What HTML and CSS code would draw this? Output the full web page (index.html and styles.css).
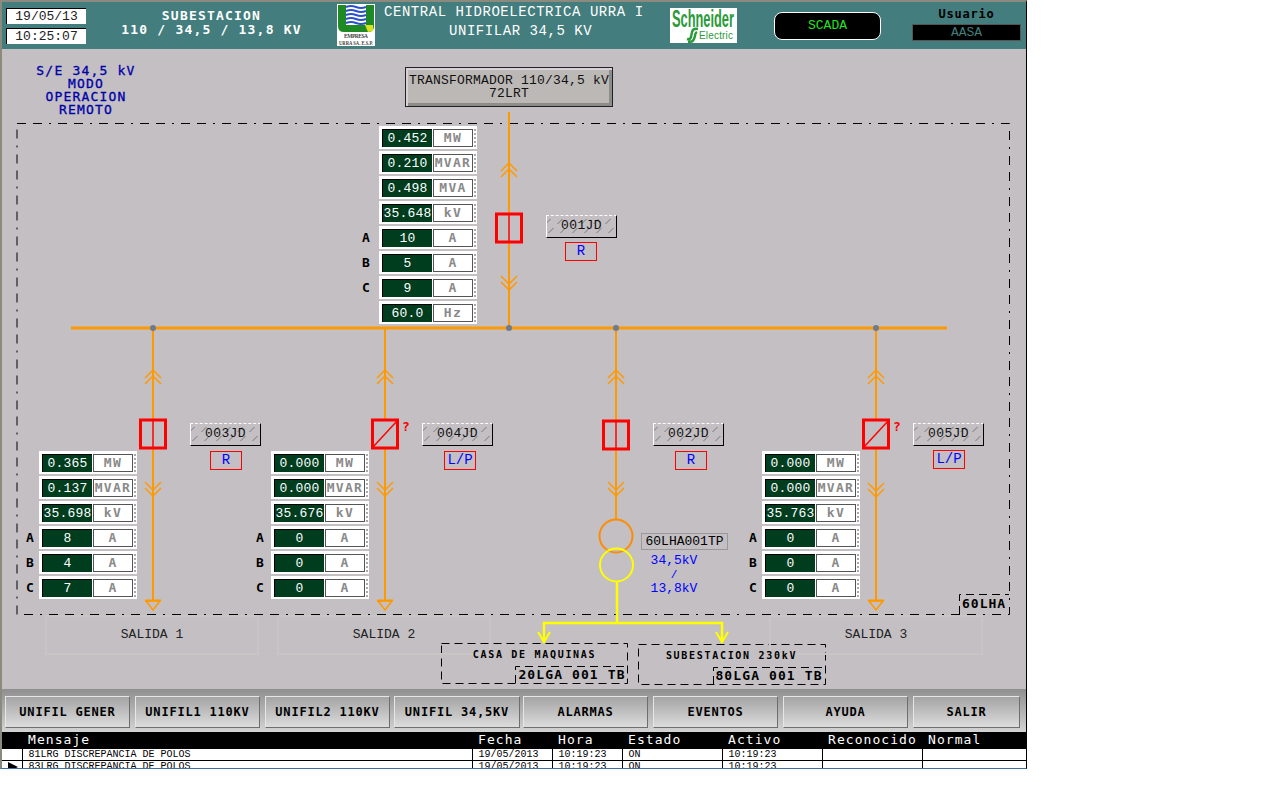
FILE: index.html
```html
<!DOCTYPE html>
<html lang="es">
<head>
    <meta charset="UTF-8">
    <title>Unifilar 34,5 kV</title>
    <link rel="stylesheet" href="styles.css">
</head>
<body>
<div class="screen">
    <!-- top bar -->
    <header class="topbar">
        <div class="clock">
            <div class="clock-box">19/05/13</div>
            <div class="clock-box">10:25:07</div>
        </div>
        <div class="station">SUBESTACION<br>110 / 34,5 / 13,8 KV</div>
        <svg class="logo-urra" width="38" height="42" viewBox="0 0 38 42">
            <rect width="38" height="42" fill="#fff"/>
            <path d="M1 1H37V22Q37 28 31 28H7Q1 28 1 22Z" fill="#1f8a24"/>
            <rect x="9" y="1" width="20" height="20" fill="#fff"/>
            <path d="M9 3q5-2 10 0t10 0M9 7q5-2 10 0t10 0M9 11q5-2 10 0t10 0M9 15q5-2 10 0t10 0M9 19q5-2 10 0t10 0" fill="none" stroke="#2a4fd0" stroke-width="2"/>
            <path d="M28 21H36V27L31 28Z" fill="#d8e020"/>
            <text class="logo-urra-text" x="19" y="34" text-anchor="middle" textLength="24">EMPRESA</text>
            <text class="logo-urra-text" x="19" y="41" text-anchor="middle" textLength="34" lengthAdjust="spacingAndGlyphs">URRA SA. E.S.P.</text>
        </svg>
        <div class="plant">
            <div class="plant-line">CENTRAL HIDROELECTRICA URRA I</div>
            <div class="plant-line plant-sub">UNIFILAR 34,5 KV</div>
        </div>
        <svg class="logo-schneider" width="67" height="35" viewBox="0 0 67 35">
            <rect width="67" height="35" fill="#fff"/>
            <text class="logo-se-name" x="2" y="19" textLength="62" lengthAdjust="spacingAndGlyphs">Schneider</text>
            <path d="M28 21Q23 20 22 24L21 29Q20 32 17 31M27 24Q25 25 25 28L24 31Q23 34 18 34" fill="none" stroke="#2a9a3a" stroke-width="2.4"/>
            <text class="logo-se-sub" x="29" y="31" textLength="34" lengthAdjust="spacing">Electric</text>
        </svg>
        <div class="scada">SCADA</div>
        <div class="user">
            <div class="user-label">Usuario</div>
            <div class="user-name">AASA</div>
        </div>
    </header>

    <!-- single line diagram, free canvas -->
    <main class="diagram">
        <svg class="wires" width="1024" height="640" viewBox="2 49 1024 640">
            <defs>
                <g id="chev-up" fill="none" stroke="#ff9900" stroke-width="1.5">
                    <polyline points="-8,8 0,0 8,8"/>
                    <polyline points="-8,14 0,6 8,14"/>
                </g>
                <g id="chev-down" fill="none" stroke="#ff9900" stroke-width="1.5">
                    <polyline points="-8,0 0,8 8,0"/>
                    <polyline points="-8,6 0,14 8,6"/>
                </g>
                <g id="end-arrow" fill="none" stroke="#ff9900">
                    <polygon points="-7,1 7,1 0,10" stroke-width="1.5"/>
                    <line x1="-8" y1="0.5" x2="8" y2="0.5" stroke-width="2"/>
                </g>
                <g id="brk-closed">
                    <rect x="-12.5" y="-14" width="25" height="28" fill="#c3bfc3" stroke="#ff0000" stroke-width="3"/>
                    <line x1="0" y1="-14" x2="0" y2="14" stroke="#ff0000" stroke-width="1.5"/>
                </g>
                <g id="brk-unknown">
                    <rect x="-12.5" y="-14" width="25" height="28" fill="#c3bfc3" stroke="#ff0000" stroke-width="3"/>
                    <line x1="-12" y1="13" x2="12" y2="-13" stroke="#ff0000" stroke-width="1.5"/>
                </g>
            </defs>

            <path class="zone" d="M17 123.5H1009.5V614.5H17Z"/>
            <path class="dashed" d="M959.5 614V594.5H1009"/>
            <path class="dashed" d="M441.5 643.5H627.5V683.5H441.5Z"/>
            <path class="dashed" d="M515.5 683V666.5H627"/>
            <path class="dashed" d="M638.5 644.5H825.5V684.5H638.5Z"/>
            <path class="dashed" d="M713.5 684V667.5H825"/>

            <path class="feeder" d="M509 112V328M153 328V600M385 328V600M616 328V520M876 328V600"/>
            <path class="bus" d="M71 328H947"/>
            <circle class="node" cx="153" cy="328" r="3"/>
            <circle class="node" cx="509" cy="328" r="3"/>
            <circle class="node" cx="616" cy="328" r="3"/>
            <circle class="node" cx="876" cy="328" r="3"/>

            <use href="#chev-up" x="509" y="163"/>
            <use href="#chev-down" x="509" y="276"/>
            <use href="#brk-closed" x="509" y="228"/>

            <use href="#chev-up" x="153" y="370"/>
            <use href="#chev-down" x="153" y="482"/>
            <use href="#brk-closed" x="153" y="434"/>
            <use href="#end-arrow" x="153" y="600"/>

            <use href="#chev-up" x="385" y="370"/>
            <use href="#chev-down" x="385" y="482"/>
            <use href="#brk-unknown" x="385" y="434"/>
            <use href="#end-arrow" x="385" y="600"/>

            <use href="#chev-up" x="616" y="370"/>
            <use href="#chev-down" x="616" y="482"/>
            <use href="#brk-closed" x="616" y="435"/>

            <use href="#chev-up" x="876" y="370"/>
            <use href="#chev-down" x="876" y="483"/>
            <use href="#brk-unknown" x="876" y="434"/>
            <use href="#end-arrow" x="876" y="600"/>

            <!-- transformer and low side -->
            <circle class="tr-high" cx="616" cy="536" r="16.5"/>
            <circle class="tr-low" cx="616.5" cy="565" r="16.5"/>
            <path class="low-side" d="M617 582V623M544 643V623H722V643"/>
            <path class="low-arrow" d="M538 632L544 642L550 632M716 632L722 642L728 632"/>
        </svg>

        <div class="mode-title">S/E 34,5 kV<br>MODO<br>OPERACION<br>REMOTO</div>
        <div class="tr-button">TRANSFORMADOR 110/34,5 kV<br>72LRT</div>

        <div class="meters m-top">
            <div class="row"><span class="phase"></span><div class="meter"><span class="val">0.452</span><span class="unit">MW</span></div></div>
            <div class="row"><span class="phase"></span><div class="meter"><span class="val">0.210</span><span class="unit">MVAR</span></div></div>
            <div class="row"><span class="phase"></span><div class="meter"><span class="val">0.498</span><span class="unit">MVA</span></div></div>
            <div class="row"><span class="phase"></span><div class="meter"><span class="val">35.648</span><span class="unit">kV</span></div></div>
            <div class="row"><span class="phase">A</span><div class="meter"><span class="val">10</span><span class="unit">A</span></div></div>
            <div class="row"><span class="phase">B</span><div class="meter"><span class="val">5</span><span class="unit">A</span></div></div>
            <div class="row"><span class="phase">C</span><div class="meter"><span class="val">9</span><span class="unit">A</span></div></div>
            <div class="row"><span class="phase"></span><div class="meter"><span class="val">60.0</span><span class="unit">Hz</span></div></div>
        </div>
        <div class="meters m-s1">
            <div class="row"><span class="phase"></span><div class="meter"><span class="val">0.365</span><span class="unit">MW</span></div></div>
            <div class="row"><span class="phase"></span><div class="meter"><span class="val">0.137</span><span class="unit">MVAR</span></div></div>
            <div class="row"><span class="phase"></span><div class="meter"><span class="val">35.698</span><span class="unit">kV</span></div></div>
            <div class="row"><span class="phase">A</span><div class="meter"><span class="val">8</span><span class="unit">A</span></div></div>
            <div class="row"><span class="phase">B</span><div class="meter"><span class="val">4</span><span class="unit">A</span></div></div>
            <div class="row"><span class="phase">C</span><div class="meter"><span class="val">7</span><span class="unit">A</span></div></div>
        </div>
        <div class="meters m-s2">
            <div class="row"><span class="phase"></span><div class="meter"><span class="val">0.000</span><span class="unit">MW</span></div></div>
            <div class="row"><span class="phase"></span><div class="meter"><span class="val">0.000</span><span class="unit">MVAR</span></div></div>
            <div class="row"><span class="phase"></span><div class="meter"><span class="val">35.676</span><span class="unit">kV</span></div></div>
            <div class="row"><span class="phase">A</span><div class="meter"><span class="val">0</span><span class="unit">A</span></div></div>
            <div class="row"><span class="phase">B</span><div class="meter"><span class="val">0</span><span class="unit">A</span></div></div>
            <div class="row"><span class="phase">C</span><div class="meter"><span class="val">0</span><span class="unit">A</span></div></div>
        </div>
        <div class="meters m-s3">
            <div class="row"><span class="phase"></span><div class="meter"><span class="val">0.000</span><span class="unit">MW</span></div></div>
            <div class="row"><span class="phase"></span><div class="meter"><span class="val">0.000</span><span class="unit">MVAR</span></div></div>
            <div class="row"><span class="phase"></span><div class="meter"><span class="val">35.763</span><span class="unit">kV</span></div></div>
            <div class="row"><span class="phase">A</span><div class="meter"><span class="val">0</span><span class="unit">A</span></div></div>
            <div class="row"><span class="phase">B</span><div class="meter"><span class="val">0</span><span class="unit">A</span></div></div>
            <div class="row"><span class="phase">C</span><div class="meter"><span class="val">0</span><span class="unit">A</span></div></div>
        </div>

        <div class="breaker-tag t-001">001JD</div><div class="mode-tag b-001">R</div>
        <div class="breaker-tag t-003">003JD</div><div class="mode-tag b-003">R</div>
        <div class="breaker-tag t-004">004JD</div><div class="mode-tag b-004">L/P</div>
        <div class="breaker-tag t-002">002JD</div><div class="mode-tag b-002">R</div>
        <div class="breaker-tag t-005">005JD</div><div class="mode-tag b-005">L/P</div>
        <span class="unknown q-004">?</span>
        <span class="unknown q-005">?</span>

        <div class="tp-tag">60LHA001TP</div>
        <div class="tp-volts">34,5kV<br><span class="tp-slash">/</span><br>13,8kV</div>

        <div class="zone-tag">60LHA</div>
        <div class="salida s-1">SALIDA 1</div>
        <div class="salida s-2">SALIDA 2</div>
        <div class="salida s-3">SALIDA 3</div>

        <div class="dest d-casa">
            <div class="dest-name">CASA DE MAQUINAS</div>
            <div class="dest-code">20LGA 001 TB</div>
        </div>
        <div class="dest d-sub">
            <div class="dest-name">SUBESTACION 230kV</div>
            <div class="dest-code">80LGA 001 TB</div>
        </div>
    </main>

    <nav class="navbar">
        <button class="nav-btn">UNIFIL GENER</button>
        <button class="nav-btn">UNIFIL1 110KV</button>
        <button class="nav-btn">UNIFIL2 110KV</button>
        <button class="nav-btn nav-btn-wide">UNIFIL 34,5KV</button>
        <button class="nav-btn">ALARMAS</button>
        <button class="nav-btn">EVENTOS</button>
        <button class="nav-btn">AYUDA</button>
        <button class="nav-btn nav-btn-last">SALIR</button>
    </nav>

    <table class="alarms">
        <colgroup>
            <col class="c-mark"><col class="c-msg"><col class="c-date"><col class="c-time"><col class="c-state"><col class="c-on"><col class="c-ack"><col class="c-norm">
        </colgroup>
        <thead>
            <tr><th></th><th>Mensaje</th><th>Fecha</th><th>Hora</th><th>Estado</th><th>Activo</th><th>Reconocido</th><th>Normal</th></tr>
        </thead>
        <tbody>
            <tr><td></td><td>81LRG DISCREPANCIA DE POLOS</td><td>19/05/2013</td><td>10:19:23</td><td>ON</td><td>10:19:23</td><td></td><td></td></tr>
            <tr><td><span class="row-mark"></span></td><td>83LRG DISCREPANCIA DE POLOS</td><td>19/05/2013</td><td>10:19:23</td><td>ON</td><td>10:19:23</td><td></td><td></td></tr>
        </tbody>
    </table>
</div>
</body>
</html>
```

FILE: styles.css
```css
body {
    margin: 0;
    background: #fff;
    font-family: "Liberation Mono", monospace;
    color: #000;
}

.screen {
    width: 1024px;
    height: 766px;
    display: flex;
    flex-direction: column;
    overflow: hidden;
    background: #c3bfc3;
    border-top: 2px solid #8c8a7c;
    border-left: 2px solid #8c8a7c;
    border-right: 1px solid #000;
    border-bottom: 1px solid #3a6ea5;
}

/* top bar */
.topbar {
    height: 47px;
    flex: none;
    display: flex;
    background: #437d7d;
    color: #fff;
}

.clock {
    width: 80px;
    margin-left: 4px;
    padding-top: 6px;
    display: flex;
    flex-direction: column;
    gap: 4px;
}

.clock-box {
    height: 15px;
    background: #fff;
    color: #222;
    border-top: 1px solid #000;
    border-left: 1px solid #000;
    font-size: 13px;
    line-height: 15px;
    text-align: center;
}

.station {
    width: 251px;
    padding-top: 7px;
    font-family: "DejaVu Sans Mono", monospace;
    font-weight: bold;
    font-size: 13px;
    line-height: 14px;
    letter-spacing: 1.2px;
    text-align: center;
}

.logo-urra {
    margin-top: 2px;
    flex: none;
}

.logo-urra-text {
    font-family: "Liberation Serif", serif;
    font-weight: bold;
    font-size: 5.5px;
    fill: #444;
}

.plant {
    width: 295px;
    padding-top: 1px;
}

.plant-line {
    padding-left: 9px;
    font-size: 14px;
    line-height: 19px;
    letter-spacing: .55px;
}

.plant-sub {
    padding-left: 74px;
}

.logo-schneider {
    margin-top: 6px;
    flex: none;
}

.logo-se-name {
    font-family: "Liberation Sans", sans-serif;
    font-weight: bold;
    font-size: 23px;
    fill: #2a9a3a;
}

.logo-se-sub {
    font-family: "Liberation Sans", sans-serif;
    font-size: 10px;
    fill: #2a9a3a;
}

.scada {
    width: 105px;
    height: 26px;
    margin: 10px 0 0 37px;
    background: #000;
    border: 1px solid #fff;
    border-radius: 8px;
    color: #1ee61e;
    font-size: 13px;
    line-height: 26px;
    text-align: center;
}

.user {
    margin-left: 31px;
    padding-top: 6px;
    width: 109px;
}

.user-label {
    height: 16px;
    font-family: "DejaVu Sans Mono", monospace;
    font-weight: bold;
    font-size: 12px;
    line-height: 13px;
    letter-spacing: .8px;
    color: #000;
    text-align: center;
}

.user-name {
    height: 15px;
    background: #000;
    border: 1px solid #555;
    color: #437d7d;
    font-size: 13px;
    line-height: 15px;
    text-align: center;
}

/* diagram canvas */
.diagram {
    position: relative;
    height: 640px;
    flex: none;
}

.wires {
    position: absolute;
    left: 0;
    top: 0;
}

.zone {
    fill: none;
    stroke: #000;
    stroke-width: 1;
    stroke-dasharray: 9 7 9 7 2 7;
}

.dashed {
    fill: none;
    stroke: #000;
    stroke-width: 1;
    stroke-dasharray: 8 5;
}

.feeder {
    fill: none;
    stroke: #ff9900;
    stroke-width: 2;
}

.bus {
    fill: none;
    stroke: #ff9900;
    stroke-width: 3;
}

.node {
    fill: #6e7b8a;
}

.tr-high {
    fill: none;
    stroke: #ff8c00;
    stroke-width: 2;
}

.tr-low {
    fill: none;
    stroke: #ffff00;
    stroke-width: 2;
}

.low-side {
    fill: none;
    stroke: #ffff00;
    stroke-width: 2.5;
}

.low-arrow {
    fill: none;
    stroke: #ffff00;
    stroke-width: 2;
}

.mode-title {
    position: absolute;
    left: 24px;
    top: 15px;
    width: 120px;
    text-align: center;
    font-family: "DejaVu Sans Mono", monospace;
    font-size: 13px;
    line-height: 13px;
    letter-spacing: 1.2px;
    color: #0000a8;
    -webkit-text-stroke: .3px #0000a8;
}

.tr-button {
    position: absolute;
    left: 403px;
    top: 18px;
    width: 208px;
    height: 40px;
    box-sizing: border-box;
    padding-top: 6px;
    background: #bcb8b6;
    border: 1px solid #222;
    box-shadow: inset 2px 2px 0 #d8d0d8, inset -3px -3px 0 #8c8c88;
    font-size: 13px;
    line-height: 13px;
    letter-spacing: .2px;
    text-align: center;
    color: #111;
}

/* measurement tables */
.meters {
    position: absolute;
    display: flex;
    flex-direction: column;
    gap: 2px;
}

.m-top { left: 355px; top: 77px; }
.m-s1 { left: 19px; top: 402px; }
.m-s2 { left: 249px; top: 402px; }
.m-s3 { left: 742px; top: 402px; }

.row {
    display: flex;
    align-items: center;
}

.phase {
    width: 18px;
    text-align: center;
    font-family: "DejaVu Sans Mono", monospace;
    font-weight: bold;
    font-size: 13px;
}

.m-top .phase { margin-right: 4px; }
.m-s2 .phase { margin-right: 2px; }

.meter {
    width: 98px;
    height: 23px;
    box-sizing: border-box;
    padding: 3px 0 2px 3px;
    display: flex;
    background: #fff;
}

.meter::after {
    content: "";
    margin-left: 1px;
    border-right: 2px dotted #aaa;
}

.val {
    width: 50px;
    height: 18px;
    box-sizing: border-box;
    overflow: hidden;
    background: #003c1e;
    border-top: 1px solid #000;
    border-left: 1px solid #000;
    color: #fff;
    font-size: 13px;
    line-height: 17px;
    letter-spacing: .2px;
    white-space: nowrap;
    text-align: center;
}

.unit {
    width: 40px;
    height: 18px;
    box-sizing: border-box;
    margin-left: 1px;
    background: #fff;
    border: 1px solid #555;
    color: #8a8a8a;
    font-family: "DejaVu Sans Mono", monospace;
    font-weight: bold;
    font-size: 13px;
    line-height: 15px;
    letter-spacing: 1.3px;
    text-align: center;
    white-space: nowrap;
    overflow: hidden;
}

/* breaker labels */
.breaker-tag {
    position: absolute;
    width: 71px;
    height: 23px;
    box-sizing: border-box;
    background:
        repeating-linear-gradient(0deg, #c3bfc3 0 4px, transparent 4px 9px),
        repeating-linear-gradient(-45deg, transparent 0 7.5px, #9c9c9c 7.5px 8.5px);
    border-top: 1px dashed #fff;
    border-left: 1px solid #fff;
    border-right: 1px solid #000;
    border-bottom: 1px solid #000;
    color: #111;
    font-size: 13px;
    line-height: 20px;
    letter-spacing: .4px;
    text-align: center;
}

.mode-tag {
    position: absolute;
    width: 32px;
    height: 19px;
    box-sizing: border-box;
    border: 1px solid #f00;
    color: #0000ff;
    font-size: 14px;
    line-height: 16px;
    text-align: center;
}

.t-001 { left: 544px; top: 166px; }
.b-001 { left: 563px; top: 193px; }
.t-003 { left: 188px; top: 374px; }
.b-003 { left: 208px; top: 402px; }
.t-004 { left: 420px; top: 374px; }
.b-004 { left: 442px; top: 402px; }
.t-002 { left: 651px; top: 374px; }
.b-002 { left: 673px; top: 402px; }
.t-005 { left: 911px; top: 374px; }
.b-005 { left: 931px; top: 401px; }

.unknown {
    position: absolute;
    font-family: "DejaVu Sans Mono", monospace;
    font-weight: bold;
    font-size: 13px;
    line-height: 12px;
    color: #f00;
}

.q-004 { left: 400px; top: 372px; }
.q-005 { left: 891px; top: 372px; }

.tp-tag {
    position: absolute;
    left: 639px;
    top: 484px;
    width: 87px;
    height: 17px;
    box-sizing: border-box;
    border: 1px solid #999;
    font-size: 13px;
    line-height: 15px;
    text-align: center;
}

.tp-volts {
    position: absolute;
    left: 646px;
    top: 505px;
    width: 52px;
    color: #0000ff;
    font-size: 13px;
    line-height: 13.5px;
    text-align: center;
}

.tp-slash {
    font-size: 11px;
}

.zone-tag {
    position: absolute;
    left: 957px;
    top: 545px;
    width: 51px;
    height: 20px;
    box-sizing: border-box;
    padding-left: 3px;
    font-family: "DejaVu Sans Mono", monospace;
    font-weight: bold;
    font-size: 13px;
    line-height: 20px;
    letter-spacing: 1px;
}

.salida {
    position: absolute;
    top: 566px;
    width: 214px;
    height: 40px;
    box-sizing: border-box;
    border: 2px solid #c8c6c5;
    color: #222;
    font-size: 13px;
    line-height: 36px;
    text-align: center;
}

.s-1 { left: 43px; }
.s-2 { left: 275px; }
.s-3 { left: 767px; }

.dest {
    position: absolute;
    width: 187px;
    height: 41px;
    box-sizing: border-box;
    display: flex;
    flex-direction: column;
    align-items: flex-end;
}

.d-casa { left: 439px; top: 594px; }
.d-sub { left: 636px; top: 595px; }

.dest-name {
    align-self: stretch;
    height: 23px;
    font-family: "DejaVu Sans Mono", monospace;
    font-weight: bold;
    font-size: 10px;
    line-height: 23px;
    letter-spacing: 1.7px;
    text-align: center;
}

.dest-code {
    width: 112px;
    height: 17px;
    font-family: "DejaVu Sans Mono", monospace;
    font-weight: bold;
    font-size: 13px;
    line-height: 17px;
    letter-spacing: 1.1px;
    text-align: center;
    white-space: nowrap;
}

/* bottom navigation */
.navbar {
    height: 43px;
    flex: none;
    box-sizing: border-box;
    padding: 7px 0 4px 3px;
    display: grid;
    grid-template-columns: 130px 130px 129px 129px 130px 130px 130px 107px;
    background: linear-gradient(#8f8f8f, #d4d4d4);
}

.nav-btn {
    width: 125px;
    height: 32px;
    padding: 0;
    background: linear-gradient(#a4a4a4, #dcdcdc);
    border: 1px solid;
    border-color: #e6e6e6 #6e6e6e #6e6e6e #e6e6e6;
    color: #000;
    font-family: "DejaVu Sans Mono", monospace;
    font-weight: bold;
    font-size: 12px;
    letter-spacing: .8px;
}

.nav-btn-wide { width: 126px; }
.nav-btn-last { width: 107px; }

/* alarm list */
.alarms {
    width: 1024px;
    flex: none;
    table-layout: fixed;
    border-collapse: collapse;
    background: #fff;
}

.c-mark { width: 20px; }
.c-msg { width: 450px; }
.c-date { width: 80px; }
.c-time { width: 70px; }
.c-state { width: 100px; }
.c-on { width: 100px; }
.c-ack { width: 100px; }
.c-norm { width: 104px; }

.alarms th {
    height: 17px;
    padding: 0 0 0 6px;
    background: #000;
    color: #fff;
    font-weight: normal;
    font-family: "DejaVu Sans Mono", monospace;
    font-size: 13px;
    line-height: 16px;
    letter-spacing: 1.05px;
    text-align: left;
    vertical-align: top;
    white-space: nowrap;
}

.alarms td {
    height: 9px;
    padding: 1px 0 0 6px;
    border-left: 1px solid #000;
    border-bottom: 1px solid #000;
    font-size: 10px;
    line-height: 10px;
    white-space: nowrap;
    overflow: hidden;
}

.alarms td:first-child {
    border-left: none;
}

.row-mark {
    display: block;
    width: 0;
    height: 0;
    border-left: 10px solid #000;
    border-top: 5px solid transparent;
    border-bottom: 5px solid transparent;
}
```
